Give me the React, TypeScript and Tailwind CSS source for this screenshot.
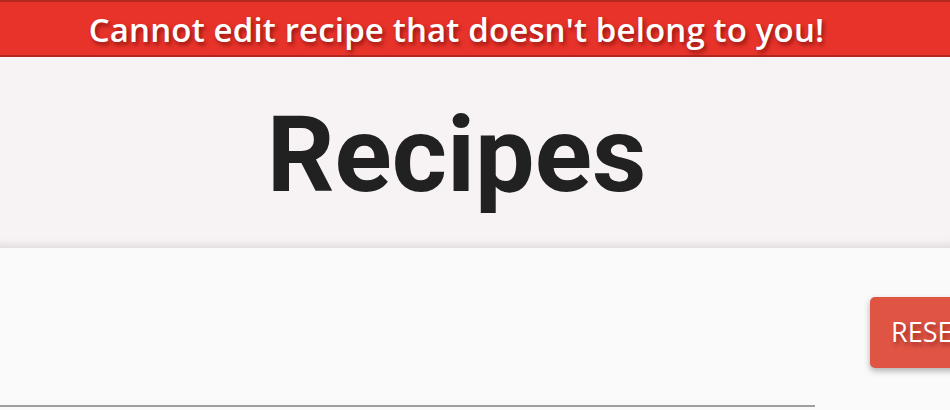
import React from "react";

function ErrorBanner({ msg }: { msg: string }) {
    return (
        <div className="flex h-[57px] items-center border-y-2 border-[#b3271f] bg-[#e8332a]">
            <p className="w-[913px] pt-[2px] text-center font-['Open_Sans',sans-serif] text-[33px] font-semibold leading-none tracking-[0.15px] text-white [text-shadow:2px_3px_4px_rgba(90,0,0,0.6)]">
                {msg}
            </p>
        </div>
    );
}

function Header() {
    return (
        <div className="flex h-[191px] items-center bg-[#f7f3f4] shadow-[inset_0_-10px_10px_-8px_rgba(0,0,0,0.12)]">
            <h1 className="w-[913px] pt-[4px] text-center font-['Roboto',sans-serif] text-[106px] font-bold leading-none text-[#212121]">
                Recipes
            </h1>
        </div>
    );
}

export default function App() {
    return (
        <div className="h-[410px] w-[950px] overflow-hidden bg-[#fafafa]">
            <ErrorBanner msg="Cannot edit recipe that doesn't belong to you!" />
            <Header />
            <div className="flex items-start">
                <div className="mt-[78px] h-[81px] w-[815px] shrink-0 border-b-2 border-[#9e9e9e]" />
                <button className="ml-[55px] mt-[49px] h-[71px] w-[140px] shrink-0 rounded-[5px] bg-[#e05444] pl-[21px] text-left font-['Open_Sans',sans-serif] text-[27px] text-white shadow-[0_3px_6px_rgba(0,0,0,0.3)] [text-shadow:2px_3px_4px_rgba(90,0,0,0.5)]">
                    RESET
                </button>
            </div>
        </div>
    );
}
